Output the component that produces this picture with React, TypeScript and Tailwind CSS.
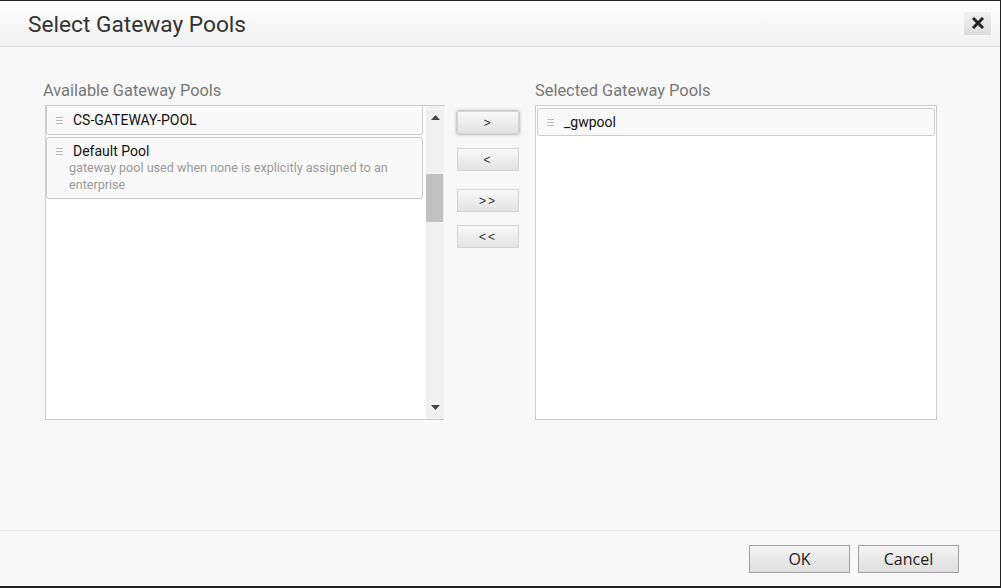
import React from "react";

function Grip() {
  return (
    <span className="flex flex-col gap-[2px] w-[7px] mt-[1px]">
      <span className="h-px bg-[#bbb]" />
      <span className="h-px bg-[#bbb]" />
      <span className="h-px bg-[#bbb]" />
    </span>
  );
}

function MoveBtn({ label, shadow }: { label: string; shadow?: boolean }) {
  return (
    <button
      className={
        "w-[62px] h-[23px] border border-[#d4d4d4] bg-gradient-to-b from-[#f8f8f8] to-[#e3e3e3] text-[12px] text-[#333] flex items-center justify-center tracking-[2px] " +
        (shadow ? "shadow-[0_0_3px_rgba(0,0,0,0.45)]" : "")
      }
      style={{ fontFamily: "'Liberation Sans', Arial, sans-serif" }}
    >
      {label}
    </button>
  );
}

export default function App() {
  return (
    <div
      className="w-[1001px] h-[588px] bg-[#f8f8f8] border-t border-r border-b-2 border-[#222] flex flex-col overflow-hidden"
      style={{ fontFamily: "Roboto, 'Noto Sans', sans-serif" }}
    >
      {/* header */}
      <div className="h-[46px] shrink-0 bg-gradient-to-b from-white to-[#f1f1f1] border-b border-[#dedede] flex items-center justify-between pl-[28px] pr-[9px]">
        <h1 className="text-[22.7px] text-[#333] leading-none mt-[3px]">Select Gateway Pools</h1>
        <button className="w-[27px] h-[23px] bg-gradient-to-b from-[#f2f2f2] to-[#dcdcdc] flex items-center justify-center mt-[-1px]">
          <svg width="12" height="12" viewBox="0 0 12 12">
            <path d="M2 2 L10 10 M10 2 L2 10" stroke="#222" strokeWidth="3" strokeLinecap="square" />
          </svg>
        </button>
      </div>

      {/* body */}
      <div className="flex-1 flex pt-[34px] pl-[43px]">
        {/* available */}
        <div className="flex flex-col w-[402px]">
          <div className="text-[16.4px] text-[#777] leading-[20px] h-[24px]">Available Gateway Pools</div>
          <div className="flex h-[315px] border-t border-[#ccc] ml-[2px]">
            <div className="w-[381px] bg-white border-l border-b border-[#ccc] flex flex-col">
              <div className="h-[29px] border-l border-r border-b border-[#ccc] rounded-b-[3px] bg-[#f9f9f9] flex items-center pl-[9px] gap-[10px] w-[377px]">
                <Grip />
                <span className="text-[14px] text-[#111]">CS-GATEWAY-POOL</span>
              </div>
              <div className="mt-[2px] h-[62px] border border-[#ccc] rounded-[3px] bg-[#f9f9f9] w-[377px] pl-[9px] pt-[5px]">
                <div className="flex items-center gap-[10px]">
                  <Grip />
                  <span className="text-[14px] text-[#111] leading-[16px]">Default Pool</span>
                </div>
                <div className="text-[12.6px] text-[#999] leading-[17px] pl-[13px] pr-[20px]">
                  gateway pool used when none is explicitly assigned to an enterprise
                </div>
              </div>
            </div>
            {/* scrollbar */}
            <div className="w-[18px] bg-[#f0f0f0] border-b border-[#ccc] flex flex-col items-center relative">
              <svg width="9" height="5" viewBox="0 0 9 5" className="mt-[9px]">
                <path d="M0 5 L4.5 0 L9 5 Z" fill="#444" />
              </svg>
              <div className="absolute left-[0px] top-[68px] w-[17px] h-[48px] bg-[#c1c1c1]" />
              <svg width="9" height="5" viewBox="0 0 9 5" className="absolute bottom-[9px]">
                <path d="M0 0 L4.5 5 L9 0 Z" fill="#444" />
              </svg>
            </div>
          </div>
        </div>

        {/* buttons */}
        <div className="flex flex-col pt-[30px] ml-[12px] gap-[14px] w-[62px]">
          <MoveBtn label=">" shadow />
          <MoveBtn label="<" />
          <div className="mt-[4px]"><MoveBtn label=">>" /></div>
          <div className="mt-[-1px]"><MoveBtn label="<<" /></div>
        </div>

        {/* selected */}
        <div className="flex flex-col w-[402px] ml-[16px]">
          <div className="text-[16.4px] text-[#777] leading-[20px] h-[24px]">Selected Gateway Pools</div>
          <div className="h-[315px] w-[402px] border border-[#ccc] bg-white px-[1px] pt-[2px]">
            <div className="h-[28px] border border-[#ccc] rounded-[3px] bg-[#f9f9f9] flex items-center pl-[9px] gap-[10px]">
              <Grip />
              <span className="text-[14px] text-[#111]">_gwpool</span>
            </div>
          </div>
        </div>
      </div>

      {/* footer */}
      <div className="h-[56px] shrink-0 border-t border-[#ececec] flex items-start justify-end gap-[8px] pr-[41px] pt-[14px]">
        {["OK", "Cancel"].map((t) => (
          <button
            key={t}
            className="w-[101px] h-[28px] border border-[#a0a0a0] bg-gradient-to-b from-[#f5f5f5] to-[#dedede] text-[16px] text-[#222] flex items-center justify-center"
            style={{ fontFamily: "'Open Sans', 'Noto Sans', sans-serif" }}
          >
            {t}
          </button>
        ))}
      </div>
    </div>
  );
}
